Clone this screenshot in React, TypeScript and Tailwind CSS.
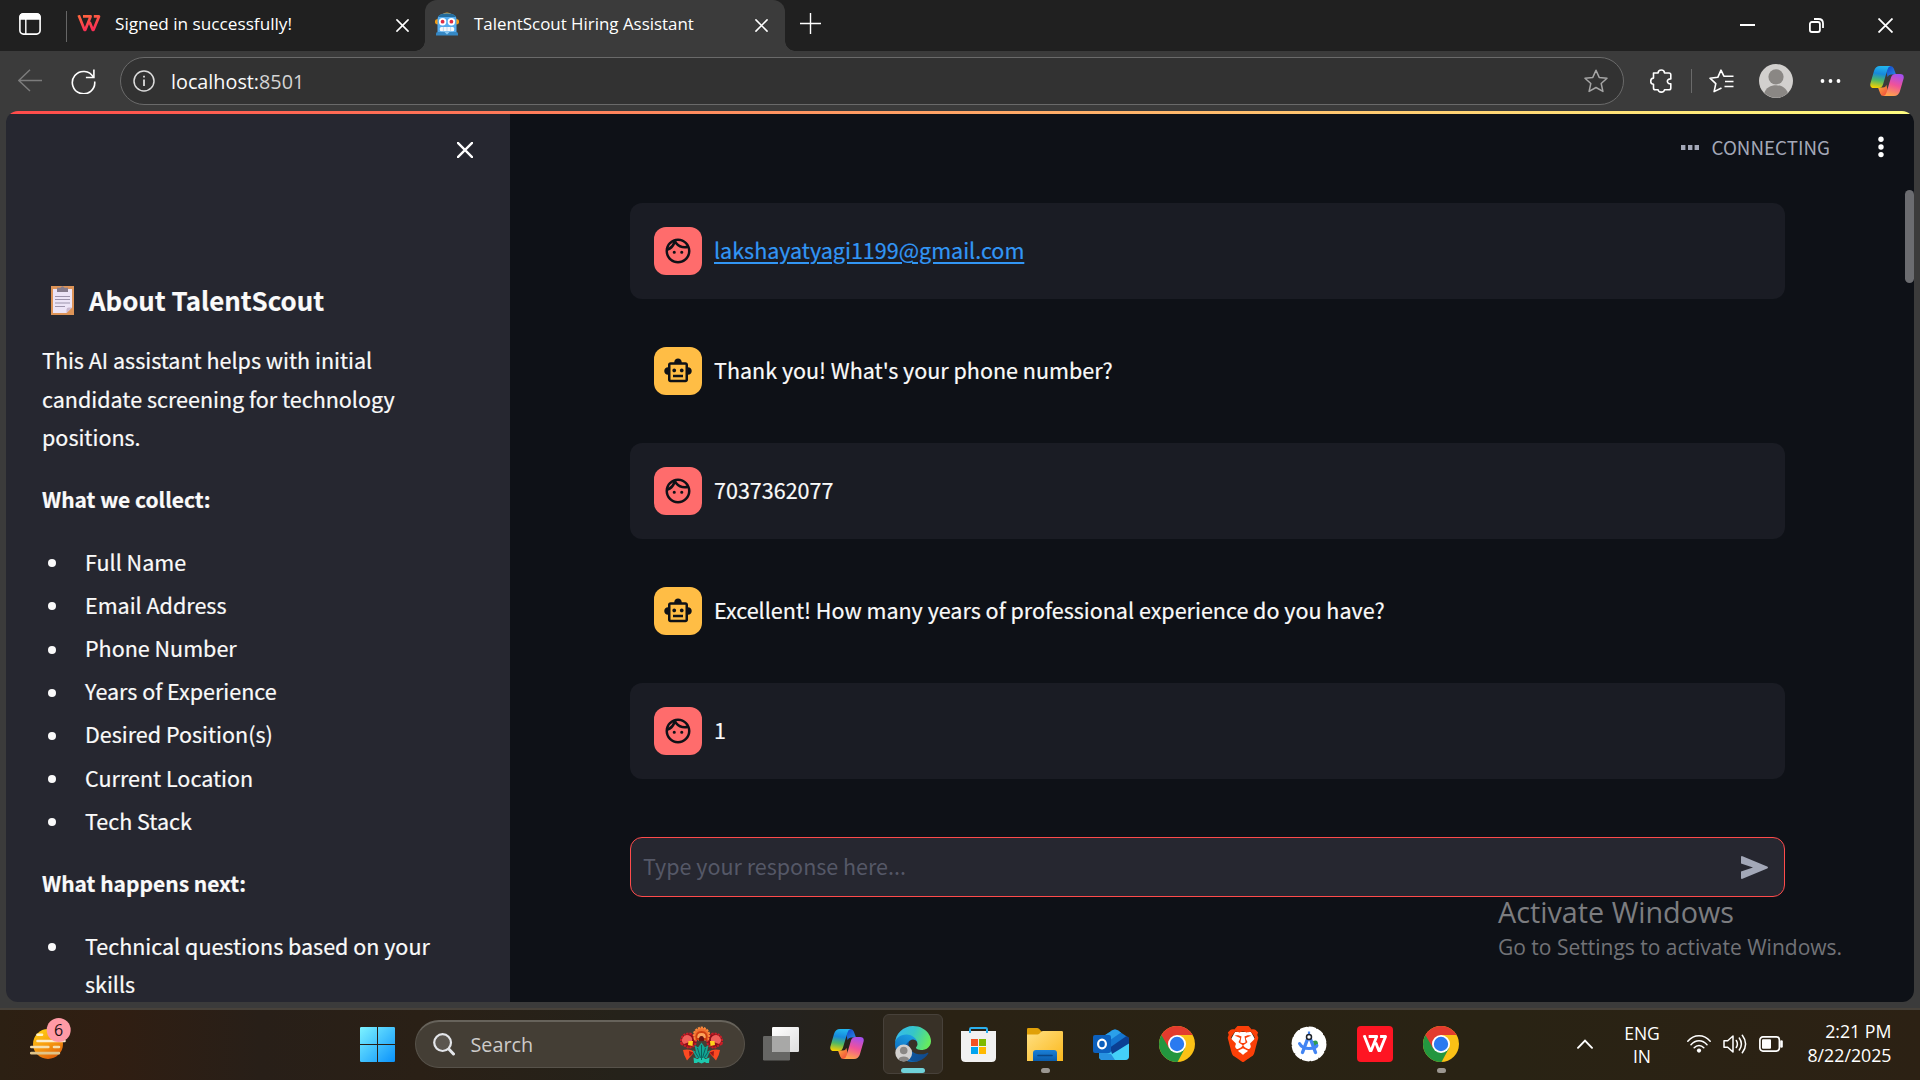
import React from "react";
import { MdOutlineFace, MdOutlineSmartToy } from "react-icons/md";
import { SiBrave } from "react-icons/si";

const collected = [
  "Full Name",
  "Email Address",
  "Phone Number",
  "Years of Experience",
  "Desired Position(s)",
  "Current Location",
  "Tech Stack",
];

type Message = { from: "user" | "bot"; text: string; link?: boolean };

const messages: Message[] = [
  { from: "user", text: "lakshayatyagi1199@gmail.com", link: true },
  { from: "bot", text: "Thank you! What's your phone number?" },
  { from: "user", text: "7037362077" },
  { from: "bot", text: "Excellent! How many years of professional experience do you have?" },
  { from: "user", text: "1" },
];

function Cross({ className }: { className: string }) {
  return (
    <svg className={className} viewBox="0 0 14 14" fill="none" stroke="currentColor" strokeWidth="1.7" strokeLinecap="round">
      <path d="M1 1l12 12M13 1L1 13" />
    </svg>
  );
}

function WpsMark({ className, stroke }: { className: string; stroke: string }) {
  return (
    <svg className={className} viewBox="0 0 24 17" fill="none" stroke={stroke} strokeWidth="2.700">
      <defs>
        <linearGradient id="wpsred" gradientUnits="userSpaceOnUse" x1="0" y1="0" x2="4" y2="17">
          <stop offset="0" stopColor="#ff6a3c" />
          <stop offset="1" stopColor="#fb2d55" />
        </linearGradient>
      </defs>
      <path d="M6 1.450H13.600L8.300 14.800H7.500L1.700 .2" strokeLinejoin="round" />
      <path d="M12.600 7L15.700 14.800H16.500L22 1.450H16.800" strokeLinejoin="round" />
    </svg>
  );
}

function RobotFavicon() {
  return (
    <svg className="h-6 w-6" viewBox="0 0 24 24">
      <path d="M7 2.500Q12-1.500 17 2.500z" fill="#f4a51f" />
      <circle cx="2.600" cy="9.700" r="2.700" fill="#f59c12" />
      <circle cx="21.400" cy="9.700" r="2.700" fill="#f59c12" />
      <path d="M2.500 20V7Q2.500 1.500 12 1.500T21.500 7v13z" fill="#56acee" />
      <path d="M3 5Q4 1.500 12 1.500T21 5z" fill="#246c9c" />
      <path d="M1 23.500v-2Q1 20 2.500 20h19q1.500 0 1.500 1.500v2z" fill="#3588c5" />
      <path d="M9.500 20h5L12 22.500z" fill="#8fcbf3" />
      <circle cx="7.600" cy="9.700" r="3.700" fill="#fff" />
      <circle cx="16.400" cy="9.700" r="3.700" fill="#fff" />
      <circle cx="7.600" cy="9.700" r="1.900" fill="#dc2c45" />
      <circle cx="16.400" cy="9.700" r="1.900" fill="#dc2c45" />
      <rect x="4.800" y="15" width="14.400" height="4.200" rx="1.500" fill="#f3f7fa" />
      <path d="M8.400 15v4.200M12 15v4.200M15.600 15v4.200" stroke="#a9cbe4" strokeWidth=".7" />
    </svg>
  );
}

function Copilot({ className }: { className: string }) {
  return (
    <svg className={className} viewBox="0 0 34 30">
      <defs>
        <linearGradient id="cpA" x1=".5" y1="0" x2=".35" y2="1">
          <stop offset="0" stopColor="#22b5ee" />
          <stop offset=".35" stopColor="#1789dc" />
          <stop offset=".65" stopColor="#4db768" />
          <stop offset="1" stopColor="#f6d000" />
        </linearGradient>
        <linearGradient id="cpB" x1=".7" y1="0" x2=".4" y2="1">
          <stop offset="0" stopColor="#a44ff0" />
          <stop offset=".5" stopColor="#f0529a" />
          <stop offset="1" stopColor="#ffa24c" />
        </linearGradient>
        <linearGradient id="cpC" x1="0" y1="0" x2="1" y2="1">
          <stop offset="0" stopColor="#123ec4" />
          <stop offset="1" stopColor="#2a8fe8" />
        </linearGradient>
        <linearGradient id="cpD" x1="0" y1="0" x2="1" y2="1">
          <stop offset="0" stopColor="#ffb23e" />
          <stop offset="1" stopColor="#ee3b3b" />
        </linearGradient>
      </defs>
      <path d="M15 0h5.500q2.500 0 3.300 2.500L26 8.500h-5q-2.500 0-3.400 2.600z" fill="url(#cpC)" />
      <path d="M19 30h-5.500q-2.500 0-3.300-2.500L8 21.500h5q2.500 0 3.400-2.600z" fill="url(#cpD)" />
      <path d="M10 0h10.500q-2.300.6-3.200 4l-4.300 14.500q-1 3.500-4.500 3.500H4Q-.5 22 .4 17.500L4 5Q5.500 0 10 0z" fill="url(#cpA)" />
      <path d="M24 30H13.500q2.300-.6 3.200-4l4.300-14.500q1-3.500 4.500-3.500H30q4.500 0 3.600 4.500L30 25q-1.500 5-6 5z" fill="url(#cpB)" />
    </svg>
  );
}

function Chrome() {
  return (
    <svg className="h-9 w-9" viewBox="0 0 36 36">
      <defs>
        <clipPath id="chromeDisc">
          <circle cx="18" cy="18" r="18" />
        </clipPath>
      </defs>
      <g clipPath="url(#chromeDisc)">
        <path d="M0 0h36v36H0z" fill="#fbc116" />
        <path d="M18 18L2.400 9l-6 10L0 38h17.500l8.300-15.500z" fill="#23963f" />
        <path d="M2.400 9L10.200 22.500 18 9h18V-2H0z" fill="#e33b2e" />
      </g>
      <circle cx="18" cy="18" r="9" fill="#fff" />
      <circle cx="18" cy="18" r="7.200" fill="#2a7af0" />
    </svg>
  );
}

function Edge() {
  return (
    <svg className="h-9 w-9" viewBox="0 0 256 256">
      <defs>
        <linearGradient id="edA" x1=".2" y1=".3" x2="1" y2=".7">
          <stop offset="0" stopColor="#0c59a4" />
          <stop offset="1" stopColor="#114a8b" />
        </linearGradient>
        <linearGradient id="edB" x1=".7" y1=".1" x2=".3" y2="1">
          <stop offset="0" stopColor="#1b9de2" />
          <stop offset="1" stopColor="#0a62b8" />
        </linearGradient>
        <linearGradient id="edC" x1="0" y1=".2" x2="1" y2=".5">
          <stop offset="0" stopColor="#35b9f1" />
          <stop offset=".5" stopColor="#36c6c7" />
          <stop offset="1" stopColor="#66eb5e" />
        </linearGradient>
      </defs>
      <path fill="url(#edA)" d="M231.1 190.5c-3.4 1.8-6.9 3.4-10.5 4.7-11.5 4.3-23.6 6.5-35.9 6.5-47.3 0-88.5-32.5-88.5-74.3.1-11.4 6.4-21.9 16.4-27.3-42.8 1.8-53.8 46.4-53.8 72.5 0 73.9 68.1 81.4 82.8 81.4 7.9 0 19.8-2.3 27-4.6l1.3-.4c27.6-9.5 51-28.1 66.600-52.800 1.200-1.900.6-4.300-1.200-5.500-1.300-.8-2.900-.9-4.200-.2z" />
      <path fill="url(#edB)" d="M105.700 241.400c-8.900-5.500-16.600-12.800-22.700-21.300-26.300-36-18.400-86.500 17.600-112.800 3.800-2.700 7.700-5.200 11.900-7.200 3.100-1.500 8.400-4.100 15.500-4 10.100.1 19.600 4.900 25.700 13 4 5.400 6.300 11.900 6.400 18.700 0-.2 24.500-79.600-80-79.600-43.900 0-80 41.700-80 78.200-.2 19.300 4 38.500 12.100 56 27.600 58.800 94.800 87.600 156.400 67.100-21.100 6.600-44.100 3.700-62.900-8.100z" />
      <path fill="url(#edC)" d="M152.300 148.900c-.8 1-3.300 2.500-3.300 5.700 0 2.600 1.700 5.100 4.700 7.200 14.400 10 41.500 8.700 41.600 8.700 10.700 0 21.100-2.900 30.300-8.300 18.800-11 30.400-31.100 30.400-52.900.3-22.400-8-37.300-11.300-43.900C223.500 23.900 177.700 0 128 0 58 0 1 56.200 0 126.200c.5-36.500 36.800-66 80-66 3.500 0 23.500.3 42 10.100 16.300 8.600 24.900 18.900 30.800 29.200 6.200 10.700 7.300 24.100 7.300 29.500 0 5.300-2.700 13.300-7.800 19.900z" />
      <circle cx="62" cy="192" r="60" fill="#d2d0ce" />
      <circle cx="62" cy="174" r="27" fill="#8a8784" />
      <path d="M24 238c4-28 72-28 76 0-20 18-56 18-76 0z" fill="#8a8784" />
    </svg>
  );
}

function TaskView() {
  return (
    <svg className="h-[34px] w-9" viewBox="0 0 36 34">
      <defs>
        <linearGradient id="tvW" x1="0" y1="0" x2="1" y2="1">
          <stop offset="0" stopColor="#fff" />
          <stop offset="1" stopColor="#dedede" />
        </linearGradient>
      </defs>
      <rect x="0" y="9" width="27" height="24.500" rx="1.200" fill="#666664" />
      <rect x="9" y="0" width="27" height="25" rx="1.200" fill="url(#tvW)" />
      <path d="M9 9h18v16H10.200Q9 25 9 23.800z" fill="#a8a8a7" />
    </svg>
  );
}

function Store() {
  return (
    <svg className="mr-px h-[35px] w-[35px]" viewBox="0 0 35 35">
      <path d="M0 4h35v26.500q0 4.500-4.500 4.500h-26Q0 35 0 30.500z" fill="#f1f1f1" />
      <path d="M9 6V2.200Q9 1 10.200 1h14.600Q26 1 26 2.200V6" fill="none" stroke="#2bb0ee" strokeWidth="2" />
      <path d="M10 12h7v7h-7z" fill="#f25022" />
      <path d="M18 12h7v7h-7z" fill="#7fba00" />
      <path d="M10 20h7v7h-7z" fill="#00a4ef" />
      <path d="M18 20h7v7h-7z" fill="#ffb900" />
    </svg>
  );
}

function Explorer() {
  return (
    <svg className="h-[33px] w-9" viewBox="0 0 36 33">
      <defs>
        <linearGradient id="exY" x1="0" y1="0" x2="1" y2="1">
          <stop offset="0" stopColor="#ffe083" />
          <stop offset="1" stopColor="#fbb81c" />
        </linearGradient>
        <linearGradient id="exB" x1="0" y1="0" x2="0" y2="1">
          <stop offset="0" stopColor="#1a80d8" />
          <stop offset="1" stopColor="#0b5cab" />
        </linearGradient>
      </defs>
      <path d="M0 1.200Q0 0 1.200 0h9q1 0 1.800.8L15 4v5H0z" fill="#e0a008" />
      <path d="M0 6.500h10.500q1 0 1.800-.8l1.900-1.900Q15 3 16 3h18.800Q36 3 36 4.200V33H0z" fill="url(#exY)" />
      <path d="M6 33v-8q0-3 3-3h18q3 0 3 3v8z" fill="url(#exB)" />
      <path d="M11 27.500h14" stroke="#0a4685" strokeWidth="1.600" strokeLinecap="round" />
    </svg>
  );
}

function Outlook() {
  return (
    <svg className="h-[31px] w-9" viewBox="0 0 36 31">
      <path d="M6 10L19.500 1.200q2.500-1.600 5 0L36 9v18q0 4-4 4H10q-4 0-4-4z" fill="#1476d0" />
      <path d="M6 10L19.500 1.200q2.500-1.600 5 0L28 3.500 10 16z" fill="#2aa0ea" />
      <path d="M36 13.500V27q0 4-4 4H10q-3 0-4-3z" fill="#44d0f8" />
      <path d="M17 18.500L33.500 7 36 9v5.500L19 25z" fill="#0b3f92" />
      <path d="M6 22l12 3 4 6H10q-4 0-4-4z" fill="#2792e0" />
      <rect x="0" y="6" width="18" height="18" rx="2" fill="#0c60bd" />
      <ellipse cx="9" cy="15" rx="3.900" ry="4.400" fill="none" stroke="#fff" strokeWidth="2.200" />
    </svg>
  );
}

function Brave() {
  return (
    <div className="relative h-9 w-9">
      <svg className="absolute inset-0 h-9 w-9" viewBox="0 0 36 36">
        <path d="M10 6h16l5 9-4 11-9 7-9-7-4-11z" fill="#fff" />
      </svg>
      <SiBrave className="absolute inset-0 h-9 w-9 text-[#fb3f08]" />
    </div>
  );
}

function AndroidStudio() {
  return (
    <svg className="h-9 w-9" viewBox="0 0 36 36">
      <circle cx="18" cy="18" r="15.800" fill="#fff" />
      <circle cx="18" cy="18" r="16" fill="none" stroke="#fff" strokeWidth="3" strokeDasharray="5.600 2.780" strokeLinecap="round" />
      <path d="M22 15q5-2 5 3t-4 4z" fill="#2f9d51" />
      <path d="M17.300 11L11.500 26.500M18.700 11L24.500 26.500" stroke="#4285f4" strokeWidth="3.400" strokeLinecap="round" />
      <path d="M8.500 17.500q2.500 5 9.500 5t8-3" fill="none" stroke="#4285f4" strokeWidth="3" strokeLinecap="round" />
      <path d="M18 5.500v4" stroke="#4285f4" strokeWidth="2.200" />
      <circle cx="18" cy="11" r="2.500" fill="#fff" stroke="#20242b" strokeWidth="1.500" />
    </svg>
  );
}

function Wps() {
  return (
    <div className="flex h-9 w-9 items-center justify-center rounded-[4px] bg-[#fe1523]">
      <WpsMark className="h-[18px] w-[26px]" stroke="#fff" />
    </div>
  );
}

function Flowers() {
  return (
    <svg className="h-[38px] w-[43px]" viewBox="0 0 43 38">
      <path d="M1.500 18A7.500 7.500 0 1 1 14 20L9 22z" fill="#8f0f1a" stroke="#c81d27" strokeWidth="2" strokeDasharray="2.200 .9" />
      <path d="M41.500 18A7.500 7.500 0 1 0 29 20L34 22z" fill="#8f0f1a" stroke="#c81d27" strokeWidth="2" strokeDasharray="2.200 .9" />
      <path d="M4 18a5 5 0 1 1 8-3z" fill="#f0605a" />
      <path d="M39 18a5 5 0 1 0-8-3z" fill="#f0605a" />
      <path d="M8.500 15l4.500 0-.5 5-4.500-1zM34.500 15l-4.500 0 .5 5 4.500-1z" fill="#ffd21c" />
      <path d="M3 24q7-1.500 11.500 2L7 34.500Q3.500 29 3 24z" fill="#fb4a22" />
      <path d="M40 24q-7-1.500-11.500 2L36 34.500Q39.500 29 40 24z" fill="#fb4a22" />
      <path d="M9 25l4.500 1.500-4 4zM34 25l-4.500 1.500 4 4z" fill="#a31515" />
      <path d="M14.500 19l3.500 2.500 3.500-5 3.500 5 3.500-2.500-1.500 7 3.500-2-3.500 8h-11L12.500 24l3.500 2z" fill="#12a594" />
      <path d="M13.500 31.500l4 1.500 4-2.500 4 2.500 4-1.500-.5 5.500h-3l-1-1-3.500 1.500-3.500-1.500-1 1h-3z" fill="#1dc9ae" />
      <path d="M21.500 19v15M17.500 22l3 10M25.500 22l-3 10M15 26l4 6M28 26l-4 6" stroke="#0a4f4f" strokeWidth=".8" />
      <path d="M15 13.500Q12.500 7 16 4q5.500-5 11 0 3.500 3 1 9.500z" fill="#f07030" stroke="#fb8a3c" strokeWidth="2" strokeDasharray="2.200 .9" />
      <path d="M16.500 13q-1-7 5-7t5 7z" fill="#fda45b" stroke="#cf3f10" strokeWidth="1.800" />
      <path d="M19 15q-.5-5 2.500-5t2.500 5z" fill="#6a1212" />
    </svg>
  );
}

function TitleBar() {
  return (
    <div className="flex h-[51px] bg-[#202020] font-['Open_Sans',sans-serif] text-white">
      <div className="flex w-[425px] pb-[3px]">
        <svg className="mt-[13px] ml-[19px] h-[22px] w-[22px]" viewBox="0 0 22 22" fill="none" stroke="#fff" strokeWidth="1.600">
          <rect x=".9" y=".9" width="20.200" height="20.200" rx="3.600" />
          <path d="M1 4Q1 1 4 1h14q3 0 3 3v2H1z" fill="#fff" />
          <path d="M6.800 6v15" strokeWidth="1.400" />
        </svg>
        <div className="mt-[11px] ml-[25px] h-[31px] w-px bg-[#666]" />
        <WpsMark className="mt-[15px] ml-[10px] h-[17px] w-6" stroke="url(#wpsred)" />
        <span className="ml-[14px] w-[280px] text-[17.200px] leading-[47px] whitespace-nowrap">Signed in successfully!</span>
        <Cross className="mt-[19px] ml-[1px] h-[13px] w-[13px]" />
      </div>
      <div className="relative flex w-[360px] rounded-t-[12px] bg-[#3b3b3b]">
        <div className="absolute bottom-0 -left-[10px] h-[10px] w-[10px] bg-[radial-gradient(circle_at_0_0,#202020_9.500px,#3b3b3b_10px)]" />
        <div className="absolute -right-[10px] bottom-0 h-[10px] w-[10px] bg-[radial-gradient(circle_at_100%_0,#202020_9.500px,#3b3b3b_10px)]" />
        <div className="mt-[12px] ml-[10px] h-6 w-6">
          <RobotFavicon />
        </div>
        <span className="ml-[15px] w-[280px] text-[16.900px] leading-[47px] whitespace-nowrap">TalentScout Hiring Assistant</span>
        <Cross className="mt-[19px] ml-[1px] h-[13px] w-[13px]" />
      </div>
      <svg className="mt-[13px] ml-[15px] h-[21px] w-[21px]" viewBox="0 0 21 21" stroke="#fff" strokeWidth="1.400">
        <path d="M10.500 0v21M0 10.500h21" />
      </svg>
      <div className="ml-auto flex pt-[18px] pr-[27px]">
        <svg className="h-[15px] w-[15px]" viewBox="0 0 15 15">
          <path d="M0 7h15" stroke="#fff" strokeWidth="2" />
        </svg>
        <svg className="ml-[54px] h-[15px] w-[15px]" viewBox="0 0 15 15" fill="none" stroke="#fff" strokeWidth="1.800">
          <rect x=".9" y="4" width="10" height="10" rx="2" />
          <path d="M5 1h4.500Q14 1 14 5.500V10" />
        </svg>
        <svg className="ml-[54px] h-[15px] w-[15px]" viewBox="0 0 15 15" stroke="#fff" strokeWidth="1.800">
          <path d="M.5.5l14 14M14.500.5l-14 14" />
        </svg>
      </div>
    </div>
  );
}

function AddressBar() {
  return (
    <div className="flex h-[60px] items-center bg-[#3b3b3b] pl-[18px]">
      <svg className="h-6 w-6" viewBox="0 0 24 24" fill="none" stroke="#7c7c7c" strokeWidth="1.500">
        <path d="M24 11.500H1M12 .8L.8 11.500 12 22" />
      </svg>
      <svg className="mr-px ml-[29px] h-[25px] w-[25px]" viewBox="0 0 25 25" fill="none" stroke="#fff" strokeWidth="1.600">
        <path d="M22.400 8.300A11.200 11.200 0 1 0 23.700 12.500" />
        <path d="M22.900 .5v8h-8" />
      </svg>
      <div className="ml-[23px] flex h-12 w-[1504px] items-center rounded-full border border-[#6a6a6a] bg-[#323232] pr-[15px] pl-[12px]">
        <svg className="h-[22px] w-[22px]" viewBox="0 0 22 22" fill="none" stroke="#dcdcdc" strokeWidth="1.500">
          <circle cx="11" cy="11" r="10" />
          <path d="M11 9.500v6.500M11 5.800v1.700" strokeWidth="1.800" />
        </svg>
        <span className="ml-[16px] flex-1 pt-px font-['Open_Sans',sans-serif] text-[19.800px] leading-[45px] text-[#fafafa]">
          localhost:<span className="text-[#d4d4d4]">8501</span>
        </span>
        <svg className="h-[24px] w-[24px]" viewBox="0 0 24 24" fill="none" stroke="#a5a5a5" strokeWidth="1.500" strokeLinejoin="round">
          <path d="M12 1.200l3.200 7.200 7.800.8-5.800 5.300 1.700 7.900L12 18.500l-6.900 3.900 1.700-7.900L1 9.200l7.800-.8z" />
        </svg>
      </div>
      <svg className="mr-px ml-[26px] h-6 w-[22px]" viewBox="0 0 22 24" fill="none" stroke="#fff" strokeWidth="1.600" strokeLinejoin="round">
        <path d="M3.500 4h4.600c.2-4 6.200-4 6.400 0H19q1.800 0 1.800 1.800v4.100c-4.600-.3-4.600 5.200 0 4.900v4.100q0 1.800-1.800 1.800h-4.500c-.3 3.200-6.100 3.200-6.400 0H5.300q-1.800 0-1.800-1.800v-3.700c-3.700-.2-3.700-5.900 0-6.100z" />
      </svg>
      <div className="ml-[18px] h-6 w-px bg-[#6a6a6a]" />
      <svg className="ml-[17px] h-6 w-[25px]" viewBox="0 0 25 24" fill="none" stroke="#fff" strokeWidth="1.600" strokeLinejoin="round">
        <path d="M12.500 19l-7.400 3.600 1.700-8L1 9.200l7.800-.9L12 1.200l2.900 6H24.500M16 12.500h8.500M15.500 17.500h9" />
      </svg>
      <svg className="ml-[25px] h-[34px] w-[34px]" viewBox="0 0 34 34">
        <circle cx="17" cy="17" r="17" fill="#d2d0ce" />
        <circle cx="17" cy="12.800" r="7.600" fill="#8a8784" />
        <path d="M5.300 29C8 18.500 26 18.500 28.700 29 22 35.300 12 35.300 5.300 29z" fill="#8a8784" />
      </svg>
      <svg className="ml-[27px] h-4 w-[22px]" viewBox="0 0 22 4" fill="#fff">
        <circle cx="2.500" cy="2" r="1.900" />
        <circle cx="10.500" cy="2" r="1.900" />
        <circle cx="18.500" cy="2" r="1.900" />
      </svg>
      <Copilot className="ml-[28px] h-[30px] w-[34px]" />
    </div>
  );
}

function Bullet({ children }: { children: React.ReactNode }) {
  return (
    <li className="flex">
      <span className="mt-[16.600px] ml-[5.700px] h-2 w-2 shrink-0 rounded-full bg-[#fafafa]" />
      <span className="ml-[29.300px]">{children}</span>
    </li>
  );
}

function Sidebar() {
  return (
    <aside className="h-full w-[504px] shrink-0 overflow-hidden bg-[#262730] pl-9 text-[21.520px] leading-[38.400px] text-[#fafafa] [-webkit-text-stroke:0.2px]">
      <div className="flex h-[169.200px] justify-end pt-[28px] pr-[37px]">
        <svg className="h-4 w-4" viewBox="0 0 16 16" stroke="#fff" strokeWidth="2.300" strokeLinecap="round">
          <path d="M.9.9l14.200 14.200M15.100.9L.9 15.100" />
        </svg>
      </div>
      <h2 className="flex items-start text-[25.830px] leading-[33.600px] font-bold">
        <svg className="mt-[2.800px] mr-[15px] ml-[9px] h-[29px] w-[23px]" viewBox="0 0 23 29">
          <path d="M0 0h23v29H0z" fill="#dd9458" />
          <path d="M2 3h19v18.500L15.500 27H2z" fill="#ece4f6" />
          <path d="M21 21.500L15.500 27v-3.500q0-2 2-2z" fill="#c9b8cf" />
          <path d="M6 1.800h3.500q2-3 4 0H17V6H6z" fill="#867c8c" />
          <path d="M4 10.500h15M4 13.500h15M4 17h15M4 20.500h10" stroke="#9c93ab" strokeWidth="1.200" />
        </svg>
        About TalentScout
      </h2>
      <p className="mt-[24.400px] w-[400px]">
        This AI assistant helps with initial
        <br />
        candidate screening for technology
        <br />
        positions.
      </p>
      <p className="mt-[23.800px] text-[20.970px] font-bold">What we collect:</p>
      <ul className="mt-6 flex flex-col gap-[4.800px]">
        {collected.map((item) => (
          <Bullet key={item}>{item}</Bullet>
        ))}
      </ul>
      <p className="mt-6 text-[20.970px] font-bold">What happens next:</p>
      <ul className="mt-6">
        <Bullet>
          Technical questions based on your
          <br />
          skills
        </Bullet>
      </ul>
    </aside>
  );
}

function ChatMessage({ message }: { message: Message }) {
  const user = message.from === "user";
  return (
    <div className={`flex h-24 rounded-[12px] p-6 ${user ? "bg-[#1a1c24]" : ""}`}>
      <div className={`flex h-12 w-12 items-center justify-center rounded-[12px] text-[#0e1117] ${user ? "bg-[#ff6c6c]" : "bg-[#ffbd45]"}`}>
        {user ? <MdOutlineFace className="h-[30px] w-[30px]" /> : <MdOutlineSmartToy className="h-[30px] w-[30px]" />}
      </div>
      <p className="mt-[4px] ml-3 text-[21.520px] leading-[38px] [-webkit-text-stroke:0.2px]">
        {message.link ? (
          <a className="text-[#3296f5] underline decoration-[1.800px] underline-offset-[2.500px]">{message.text}</a>
        ) : (
          message.text
        )}
      </p>
    </div>
  );
}

function Main() {
  return (
    <main className="relative flex flex-1 flex-col bg-[#0e1117] text-[#fafafa]">
      <div className="flex h-[89px] pt-[14px]">
        <svg className="mt-[17px] ml-[1171px] h-[5px] w-[18px]" viewBox="0 0 18 5" fill="#a3a8b8">
          <path d="M0 0h4.400v5H0zM7 0h4.400v5H7zM13.600 0H18v5h-4.400z" />
        </svg>
        <span className="ml-[12.500px] w-[118px] text-[18.800px] leading-[38px] text-[#a3a8b8]">CONNECTING</span>
        <svg className="mt-[8px] ml-[48.500px] h-[22px] w-[6px]" viewBox="0 0 6 22" fill="#fff">
          <circle cx="3" cy="3.300" r="2.700" />
          <circle cx="3" cy="11" r="2.700" />
          <circle cx="3" cy="18.600" r="2.700" />
        </svg>
      </div>
      <div className="ml-[120px] flex w-[1155px] flex-col gap-6">
        {messages.map((message) => (
          <ChatMessage key={message.text} message={message} />
        ))}
      </div>
      <div className="mt-[58px] ml-[120px] flex h-[60px] w-[1155px] items-center rounded-[12px] border border-[#ff4b4b] bg-[#262730] pr-[16px] pl-[12px]">
        <span className="flex-1 pb-[3px] text-[21.500px] leading-[38px] text-[#555867]">Type your response here...</span>
        <svg className="h-[23px] w-[27px]" viewBox="0 0 27 23" fill="#a3a8b8">
          <path d="M0 1.300Q0-.3 1.500.2l24.700 10.300q1.600 1 0 2L1.500 22.800Q0 23.300 0 21.700v-6.300l12-3.900L0 7.600z" />
        </svg>
      </div>
      <div className="absolute top-[779px] left-[988px] font-['Open_Sans',sans-serif] whitespace-nowrap">
        <p className="text-[28.750px] leading-[38px] text-[#7c7d80]">Activate Windows</p>
        <p className="text-[21px] leading-[32px] text-[#727377]">Go to Settings to activate Windows.</p>
      </div>
      <div className="absolute top-[76px] right-0 h-[93px] w-[9px] rounded-full bg-[#6b6c70]" />
    </main>
  );
}

function TaskButton({ children, state }: { children: React.ReactNode; state?: "active" | "open" }) {
  return (
    <div className="flex w-[66px] justify-center">
      <div
        className={`flex h-[60px] w-[60px] flex-col items-center rounded-[6px] border pt-[11px] ${
          state === "active" ? "border-[#47413a] bg-[#383127]" : "border-transparent"
        }`}
      >
        <div className="flex h-9 w-9 items-center justify-center">{children}</div>
        {state === "active" && <div className="mt-[6px] h-[5px] w-6 rounded-full bg-[#70d2d9]" />}
        {state === "open" && <div className="mt-[6px] h-[5px] w-[9px] rounded-full bg-[#9b9791]" />}
      </div>
    </div>
  );
}

function Taskbar() {
  return (
    <div className="flex h-[72px] border-t-2 border-[#48423a] bg-[linear-gradient(90deg,#2c2013_0,#301e12_110px,#281f18_260px,#2a2016_420px,#25221a_620px,#232220_760px,#2a2214_950px,#292314_1500px,#2c2114_1920px)] font-['Open_Sans',sans-serif] text-white">
      <svg className="mt-[8px] ml-[30px] h-[42px] w-[42px]" viewBox="0 0 42 42">
        <defs>
          <linearGradient id="sun" x1=".2" y1="0" x2=".7" y2="1">
            <stop offset="0" stopColor="#ffcf14" />
            <stop offset=".5" stopColor="#f79d10" />
            <stop offset="1" stopColor="#de5d0a" />
          </linearGradient>
        </defs>
        <circle cx="18" cy="26" r="15" fill="url(#sun)" />
        <path d="M7.500 16.700h4.500" stroke="#fff3c8" strokeWidth="2.600" strokeLinecap="round" />
        <path d="M7.500 23h27" stroke="#fdeccb" strokeWidth="2.600" strokeLinecap="round" />
        <path d="M1.300 29h17M24 29h5" stroke="#f6dfae" strokeWidth="2.600" strokeLinecap="round" />
        <path d="M1.300 35.200h27.500" stroke="#e0c48a" strokeWidth="2.800" strokeLinecap="round" />
        <circle cx="28.700" cy="12" r="12" fill="#ff9aa5" />
        <text x="28.700" y="17.800" textAnchor="middle" fontSize="16" fontFamily="Open Sans" fill="#1c1012">6</text>
      </svg>
      <svg className="mt-[17px] ml-[288px] h-[35px] w-[35px]" viewBox="0 0 35 35">
        <defs>
          <linearGradient id="win" gradientUnits="userSpaceOnUse" x1="0" y1="0" x2="35" y2="35">
            <stop offset="0" stopColor="#7df3ff" />
            <stop offset="1" stopColor="#0a92fb" />
          </linearGradient>
        </defs>
        <path d="M1.200 0H17v17H0V1.200Q0 0 1.200 0zM18 0h15.800Q35 0 35 1.200V17H18zM0 18h17v17H1.200Q0 35 0 33.800zM18 18h17v15.800q0 1.200-1.200 1.200H18z" fill="url(#win)" />
      </svg>
      <div className="mt-[10px] ml-[20px] flex h-12 w-[330px] rounded-full border border-t-2 border-[#57524a] border-t-[#67635b] bg-[#443e35]">
        <svg className="mt-[11px] ml-[17px] h-[23px] w-[22px]" viewBox="0 0 22 23" fill="none" stroke="#e4e6ea">
          <circle cx="9.600" cy="9.600" r="8.400" strokeWidth="2.200" fill="#5b564f" />
          <path d="M15.800 16l4.700 5" strokeWidth="3" strokeLinecap="round" />
        </svg>
        <span className="ml-[15.500px] flex-1 text-[19.800px] leading-[45px] text-[#cdcbc9]">Search</span>
        <div className="mt-[4px] mr-[21px]">
          <Flowers />
        </div>
      </div>
      <div className="mt-[4px] ml-[3px] flex">
        <TaskButton><TaskView /></TaskButton>
        <TaskButton><Copilot className="h-[30px] w-[34px]" /></TaskButton>
        <TaskButton state="active"><Edge /></TaskButton>
        <TaskButton><Store /></TaskButton>
        <TaskButton state="open"><Explorer /></TaskButton>
        <TaskButton><Outlook /></TaskButton>
        <TaskButton><Chrome /></TaskButton>
        <TaskButton><Brave /></TaskButton>
        <TaskButton><AndroidStudio /></TaskButton>
        <TaskButton><Wps /></TaskButton>
        <TaskButton state="open"><Chrome /></TaskButton>
      </div>
      <svg className="mt-[29px] ml-[103px] h-[10px] w-4" viewBox="0 0 16 10" fill="none" stroke="#fff" strokeWidth="1.900" strokeLinecap="round">
        <path d="M1 8.800l7-7.300 7 7.300" />
      </svg>
      <div className="mt-[12px] ml-[26.500px] w-[45px] text-center text-[17.500px] leading-[23px]">
        <p>ENG</p>
        <p>IN</p>
      </div>
      <svg className="mt-[25px] ml-[22.500px] h-[18px] w-6" viewBox="0 0 24 18" fill="none" stroke="#fff" strokeWidth="1.500" strokeLinecap="round">
        <path d="M.8 6.200C7-1 17-1 23.200 6.200M4 9.700c4.500-5.300 11.500-5.300 16 0M7.200 12.800c2.700-3.200 6.900-3.200 9.600 0" />
        <circle cx="12" cy="15.600" r="2.100" fill="#fff" stroke="none" />
      </svg>
      <svg className="mt-[24px] ml-[12px] h-5 w-6" viewBox="0 0 24 20" fill="none" stroke="#fff" strokeWidth="1.500" strokeLinecap="round" strokeLinejoin="round">
        <path d="M1 6.800h3.700L10 2v16l-5.300-4.800H1zM13.300 6.500q2.200 3.500 0 7M16.300 4q4.200 6 0 12M19.300 1.300q6.600 8.700 0 17.400" />
      </svg>
      <svg className="mt-[26px] ml-[12px] h-[16px] w-6" viewBox="0 0 24 16" fill="none" stroke="#fff" strokeWidth="1.700">
        <rect x=".9" y=".9" width="19.500" height="14.200" rx="3" />
        <rect x="3" y="3.200" width="9" height="9.600" rx="1" fill="#fff" stroke="none" />
        <path d="M22.500 5.500v5" strokeWidth="2.600" strokeLinecap="round" />
      </svg>
      <div className="mt-[9px] ml-auto pr-[28.500px] text-right text-[17.750px] leading-[24px]">
        <p>2:21 PM</p>
        <p>8/22/2025</p>
      </div>
    </div>
  );
}

export default function App() {
  return (
    <div className="h-[1080px] w-[1920px] overflow-hidden bg-[#3b3b3b]">
      <TitleBar />
      <AddressBar />
      <div className="mx-[6px] mb-[6px] h-[891px] overflow-hidden rounded-[12px] font-['Noto_Sans_CJK_SC',sans-serif]">
        <div className="h-[3px] bg-[linear-gradient(90deg,#ff4b4b,#fffd80)]" />
        <div className="flex h-[888px]">
          <Sidebar />
          <Main />
        </div>
      </div>
      <Taskbar />
    </div>
  );
}
